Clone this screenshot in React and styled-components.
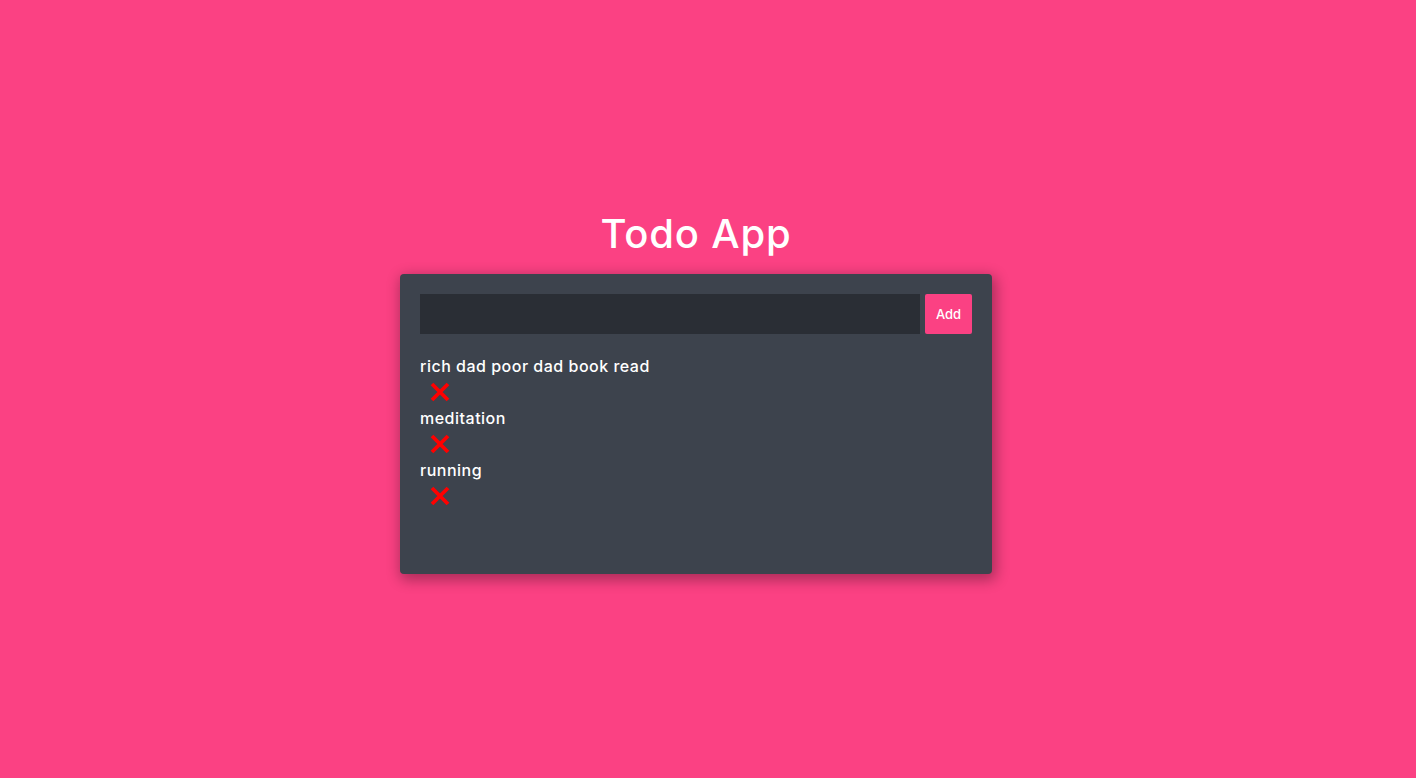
import React from "react";
import styled, { createGlobalStyle } from "styled-components";

const Global = createGlobalStyle`
  html, body { margin: 0; padding: 0; height: 100%; }
  body { background: #fb4183; font-family: Inter, "Noto Sans", sans-serif; }
  #root { height: 100%; }
`;

const Page = styled.div`
  min-height: 100vh;
  box-sizing: border-box;
  padding-right: 24px;
  display: flex;
  flex-direction: column;
  align-items: center;
  justify-content: center;
`;

const Title = styled.h1`
  margin: 0 0 10px;
  font-size: 40px;
  line-height: 60px;
  font-weight: 500;
  letter-spacing: 0.8px;
  color: #fff;
`;

const Card = styled.div`
  width: 552px;
  height: 260px;
  padding: 20px;
  background: #3d434d;
  border-radius: 4px;
  box-shadow: 2px 4px 14px 2px rgba(0, 0, 0, 0.32);
`;

const Form = styled.form`
  display: flex;
  gap: 5px;
  margin-bottom: 20px;
`;

const Input = styled.input`
  width: 500px;
  height: 40px;
  box-sizing: border-box;
  border: none;
  outline: none;
  background: #2a2e35;
  color: #fff;
  padding: 0 10px;
  font-size: 16px;
  font-family: inherit;
`;

const AddButton = styled.button`
  width: 47px;
  height: 40px;
  border: none;
  border-radius: 2px;
  background: #fb4183;
  color: #fff;
  font-family: inherit;
  font-size: 13px;
  font-weight: 500;
  padding: 0;
`;

const List = styled.ul`
  list-style: none;
  margin: 0;
  padding: 0;
`;

const Item = styled.li`
  color: #fff;
  font-size: 16px;
  font-weight: 500;
  line-height: 24px;
  letter-spacing: 0.5px;
`;

const Remove = styled.button`
  display: block;
  background: none;
  border: none;
  padding: 3px 0 0 10px;
  height: 28px;
  cursor: pointer;
`;

const Cross = () => (
  <svg width="20" height="20" viewBox="0 0 20 20">
    <path d="M2 2 L18 18 M18 2 L2 18" stroke="#ff0000" strokeWidth="3.8" strokeLinecap="butt" />
  </svg>
);

const todos = ["rich dad poor dad book read", "meditation", "running"];

export default function App() {
  return (
    <Page>
      <Global />
      <Title>Todo App</Title>
      <Card>
        <Form onSubmit={(e) => e.preventDefault()}>
          <Input type="text" />
          <AddButton type="submit">Add</AddButton>
        </Form>
        <List>
          {todos.map((t) => (
            <Item key={t}>
              {t}
              <Remove type="button" aria-label="remove">
                <Cross />
              </Remove>
            </Item>
          ))}
        </List>
      </Card>
    </Page>
  );
}
